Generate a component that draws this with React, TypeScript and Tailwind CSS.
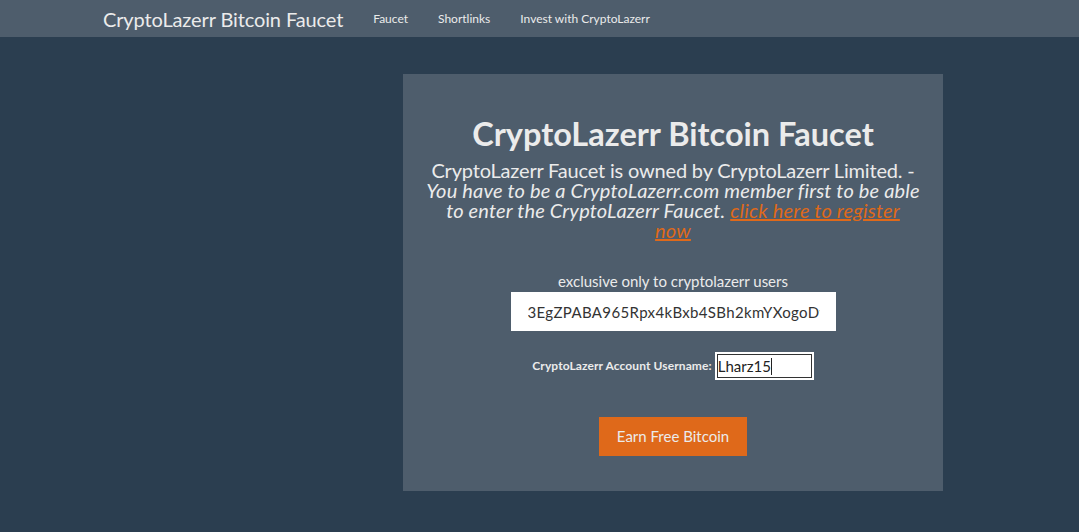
import React from "react";

export default function App() {
  return (
    <div className="min-h-[532px] w-full bg-[#2b3e50] text-[#ebebeb]" style={{ fontFamily: "Lato, 'Open Sans', sans-serif" }}>
      <nav className="h-[37px] bg-[#4e5d6c] flex items-center pl-[103px]">
        <span className="text-[20px] leading-none tracking-[-0.12px] text-[#ebebeb]">CryptoLazerr Bitcoin Faucet</span>
        <div className="flex ml-[15px] text-[12px] text-[#ebebeb]">
          <span className="px-[15px]">Faucet</span>
          <span className="px-[15px]">Shortlinks</span>
          <span className="px-[15px]">Invest with CryptoLazerr</span>
        </div>
      </nav>
      <div className="pt-[37px] pl-[403px]">
        <div className="w-[540px] h-[417px] bg-[#4e5d6c] flex flex-col items-center px-[20px]">
          <h1 className="mt-[40px] text-[32.5px] font-bold leading-[40px] text-[#ebebeb]">CryptoLazerr Bitcoin Faucet</h1>
          <p className="mt-[6px] text-[20px] leading-[20px] text-center">
            <span className="tracking-[-0.18px]">CryptoLazerr Faucet is owned by CryptoLazerr Limited. -</span>{" "}
            <i className="tracking-[0.18px]">
              You have to be a CryptoLazerr.com member first to be able to enter the CryptoLazerr Faucet.{" "}
              <a className="text-[#df691a] underline">click here to register<br />now</a>
            </i>
          </p>
          <div className="mt-[31px] text-[15px] leading-[20px]">exclusive only to cryptolazerr users</div>
          <div className="mt-[1px] w-[325px] h-[39px] bg-white flex items-center pl-[17px] pr-[16px]">
            <div className="flex-1 overflow-hidden">
              <span className="whitespace-nowrap text-[15px] tracking-[0.35px] text-[#333]">3EgZPABA965Rpx4kBxb4SBh2kmYXogoDwP</span>
            </div>
          </div>
          <div className="mt-[21px] flex items-center">
            <span className="text-[12px] font-bold tracking-[0.1px]">CryptoLazerr Account Username:</span>
            <div className="ml-[3px] w-[99px] h-[28px] bg-white border-2 border-white outline outline-1 outline-[#333] -outline-offset-[3px] flex items-center pl-[1px]">
              <span className="text-[15px] text-[#222] leading-none">Lharz15</span>
              <span className="w-px h-[17px] bg-[#222]"></span>
            </div>
          </div>
          <button className="mt-[37px] w-[148px] h-[39px] bg-[#df691a] text-[15px] text-[#ebebeb]">Earn Free Bitcoin</button>
        </div>
      </div>
    </div>
  );
}
